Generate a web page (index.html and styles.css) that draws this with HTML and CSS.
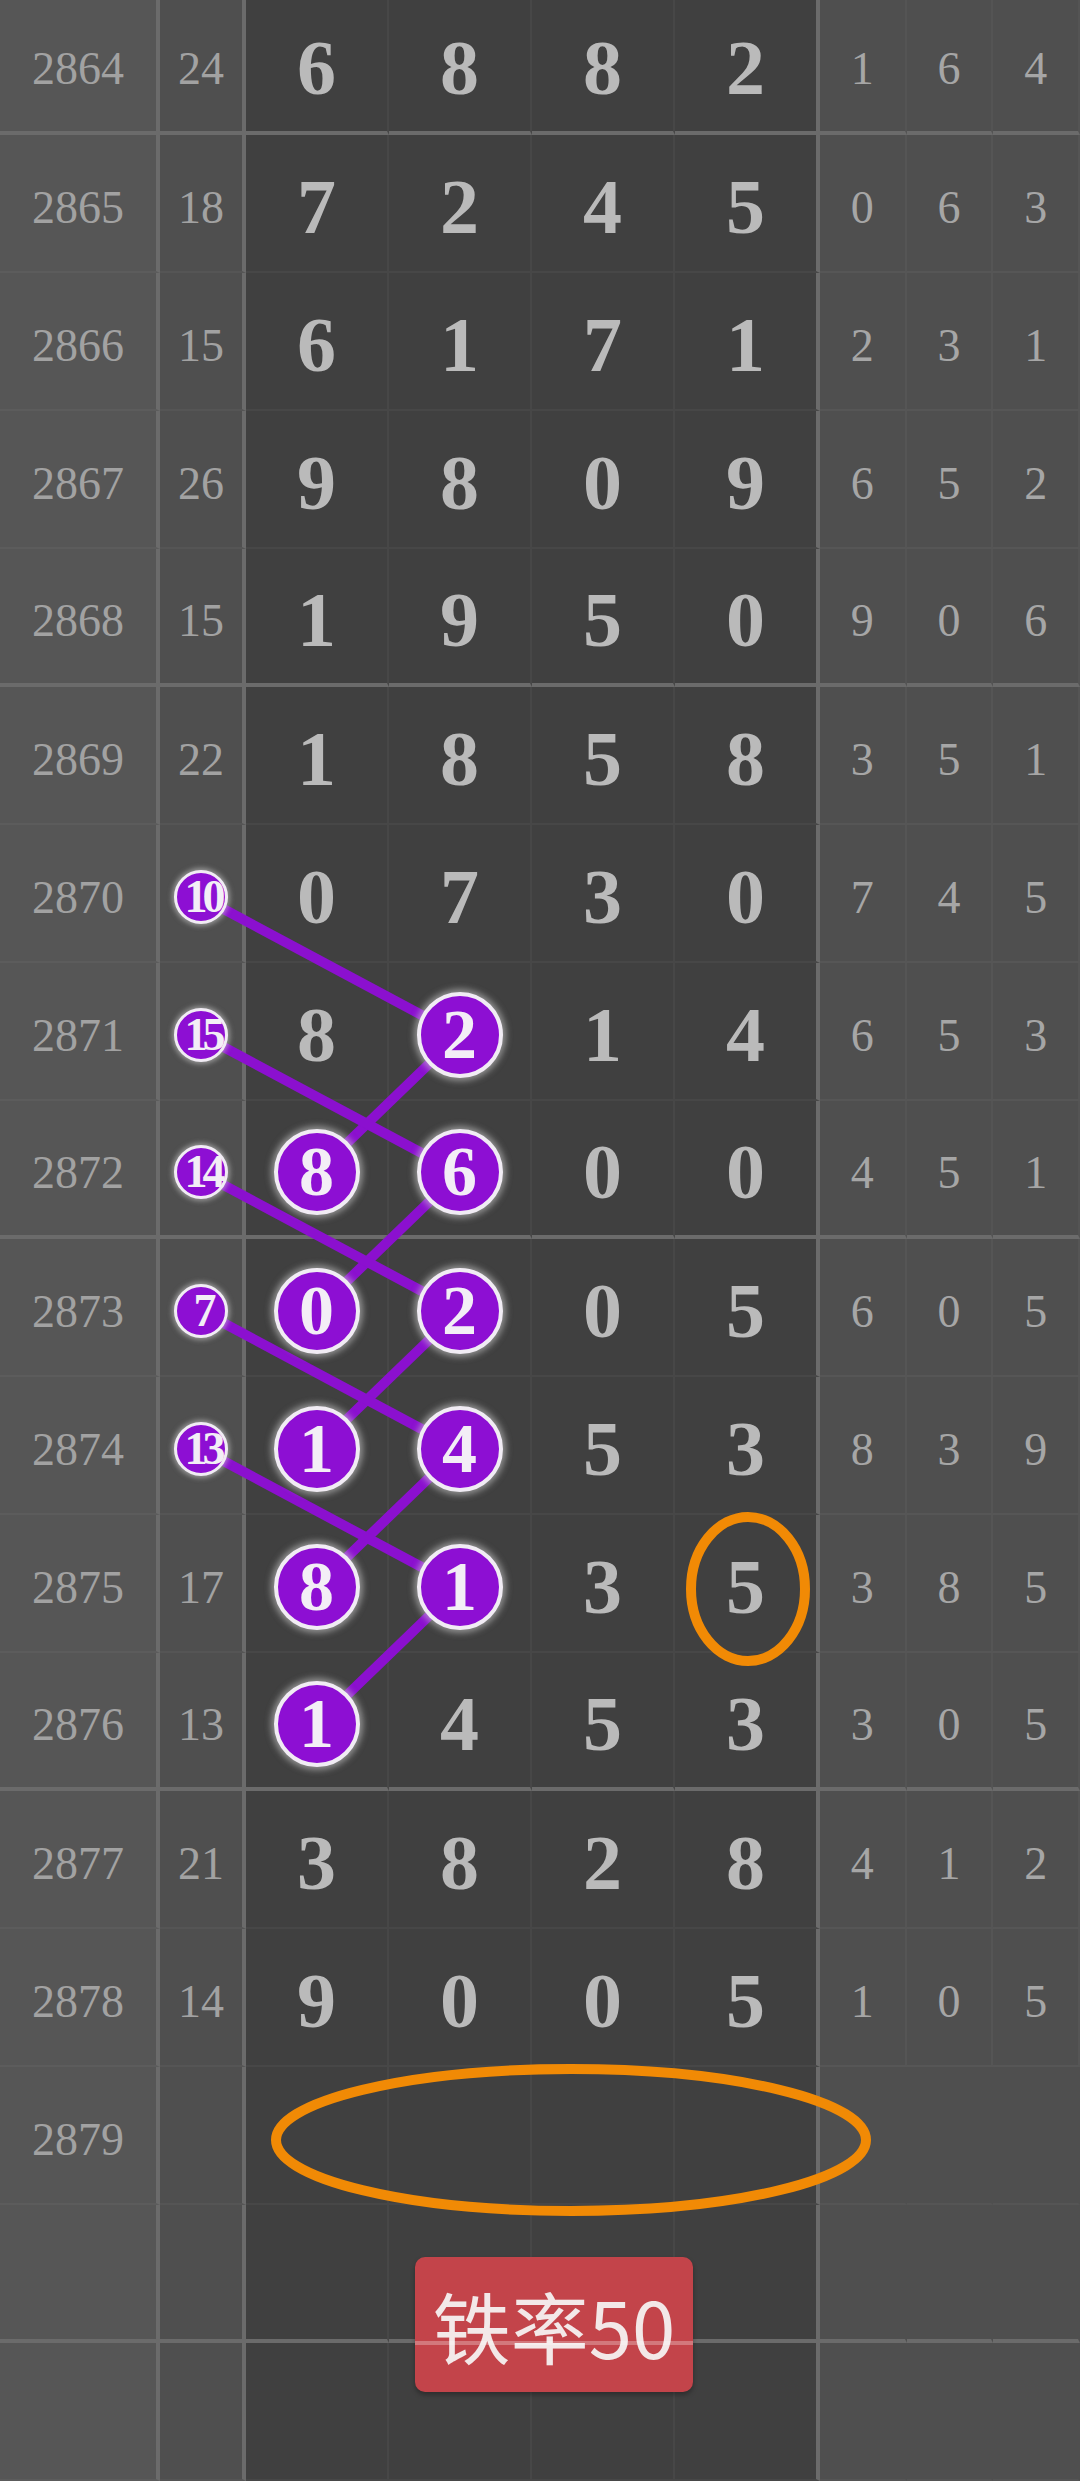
FILE: index.html
```html
<!DOCTYPE html>
<html lang="zh">
<head>
    <meta charset="UTF-8">
    <meta name="viewport" content="width=device-width, initial-scale=1.0">
    <title>走势图</title>
    <link rel="stylesheet" href="styles.css">
</head>
<body>
    <div class="page">
        <div class="sheet">
            <div class="row end"><div class="no">2864</div><div class="sum">24</div><div class="d">6</div><div class="d">8</div><div class="d">8</div><div class="d last">2</div><div class="r">1</div><div class="r">6</div><div class="r">4</div></div>
            <div class="row"><div class="no">2865</div><div class="sum">18</div><div class="d">7</div><div class="d">2</div><div class="d">4</div><div class="d last">5</div><div class="r">0</div><div class="r">6</div><div class="r">3</div></div>
            <div class="row"><div class="no">2866</div><div class="sum">15</div><div class="d">6</div><div class="d">1</div><div class="d">7</div><div class="d last">1</div><div class="r">2</div><div class="r">3</div><div class="r">1</div></div>
            <div class="row"><div class="no">2867</div><div class="sum">26</div><div class="d">9</div><div class="d">8</div><div class="d">0</div><div class="d last">9</div><div class="r">6</div><div class="r">5</div><div class="r">2</div></div>
            <div class="row end"><div class="no">2868</div><div class="sum">15</div><div class="d">1</div><div class="d">9</div><div class="d">5</div><div class="d last">0</div><div class="r">9</div><div class="r">0</div><div class="r">6</div></div>

            <div class="row"><div class="no">2869</div><div class="sum">22</div><div class="d">1</div><div class="d">8</div><div class="d">5</div><div class="d last">8</div><div class="r">3</div><div class="r">5</div><div class="r">1</div></div>
            <div class="row"><div class="no">2870</div><div class="sum"><span class="ball sm">10</span></div><div class="d">0</div><div class="d">7</div><div class="d">3</div><div class="d last">0</div><div class="r">7</div><div class="r">4</div><div class="r">5</div></div>
            <div class="row"><div class="no">2871</div><div class="sum"><span class="ball sm">15</span></div><div class="d">8</div><div class="d"><span class="ball">2</span></div><div class="d">1</div><div class="d last">4</div><div class="r">6</div><div class="r">5</div><div class="r">3</div></div>
            <div class="row end"><div class="no">2872</div><div class="sum"><span class="ball sm">14</span></div><div class="d"><span class="ball">8</span></div><div class="d"><span class="ball">6</span></div><div class="d">0</div><div class="d last">0</div><div class="r">4</div><div class="r">5</div><div class="r">1</div></div>

            <div class="row"><div class="no">2873</div><div class="sum"><span class="ball sm">7</span></div><div class="d"><span class="ball">0</span></div><div class="d"><span class="ball">2</span></div><div class="d">0</div><div class="d last">5</div><div class="r">6</div><div class="r">0</div><div class="r">5</div></div>
            <div class="row"><div class="no">2874</div><div class="sum"><span class="ball sm">13</span></div><div class="d"><span class="ball">1</span></div><div class="d"><span class="ball">4</span></div><div class="d">5</div><div class="d last">3</div><div class="r">8</div><div class="r">3</div><div class="r">9</div></div>
            <div class="row"><div class="no">2875</div><div class="sum">17</div><div class="d"><span class="ball">8</span></div><div class="d"><span class="ball">1</span></div><div class="d">3</div><div class="d last">5</div><div class="r">3</div><div class="r">8</div><div class="r">5</div></div>
            <div class="row end"><div class="no">2876</div><div class="sum">13</div><div class="d"><span class="ball">1</span></div><div class="d">4</div><div class="d">5</div><div class="d last">3</div><div class="r">3</div><div class="r">0</div><div class="r">5</div></div>

            <div class="row"><div class="no">2877</div><div class="sum">21</div><div class="d">3</div><div class="d">8</div><div class="d">2</div><div class="d last">8</div><div class="r">4</div><div class="r">1</div><div class="r">2</div></div>
            <div class="row"><div class="no">2878</div><div class="sum">14</div><div class="d">9</div><div class="d">0</div><div class="d">0</div><div class="d last">5</div><div class="r">1</div><div class="r">0</div><div class="r">5</div></div>
            <div class="row"><div class="no">2879</div><div class="sum"></div><div class="d"></div><div class="d"></div><div class="d"></div><div class="d last"></div><div class="r blank"></div><div class="r blank"></div><div class="r blank"></div></div>
            <div class="row end"><div class="no"></div><div class="sum"></div><div class="d"></div><div class="d"></div><div class="d"></div><div class="d last"></div><div class="r blank"></div><div class="r blank"></div><div class="r blank"></div></div>

            <div class="row"><div class="no"></div><div class="sum"></div><div class="d"></div><div class="d"></div><div class="d"></div><div class="d last"></div><div class="r blank"></div><div class="r blank"></div><div class="r blank"></div></div>
        </div>

        <!-- connecting lines and hand-drawn marks -->
        <svg class="marks" width="1080" height="2481" viewBox="0 0 1080 2481">
            <g stroke="#8b10cf" stroke-width="10" stroke-linecap="round">
                <line x1="201" y1="897" x2="459" y2="1035"/>
                <line x1="459" y1="1035" x2="316" y2="1173"/>
                <line x1="201" y1="1035" x2="459" y2="1173"/>
                <line x1="459" y1="1173" x2="316" y2="1311"/>
                <line x1="201" y1="1173" x2="459" y2="1311"/>
                <line x1="459" y1="1311" x2="316" y2="1449"/>
                <line x1="201" y1="1311" x2="459" y2="1449"/>
                <line x1="459" y1="1449" x2="316" y2="1587"/>
                <line x1="201" y1="1449" x2="459" y2="1587"/>
                <line x1="459" y1="1587" x2="316" y2="1725"/>
            </g>
            <g fill="none" stroke="#f18a05" stroke-width="10">
                <ellipse cx="748" cy="1589" rx="57" ry="72"/>
                <ellipse cx="571" cy="2140" rx="295" ry="71"/>
            </g>
        </svg>

        <div class="badge">铁率50</div>
    </div>
</body>
</html>
```

FILE: styles.css
```css
* {
    box-sizing: border-box;
}

body {
    margin: 0;
    background: #404040;
    font-family: "Liberation Serif", "Times New Roman", serif;
}

.page {
    position: relative;
    width: 1080px;
    height: 2481px;
    overflow: hidden;
}

.sheet {
    margin-top: -3px;
}

.row {
    display: grid;
    grid-template-columns: 160px 86px 143px 143px 143px 145px 1fr 1fr 1fr;
    height: 138px;
}

.row > div {
    display: flex;
    align-items: center;
    justify-content: center;
    padding-top: 8px;
    border-bottom: 2px solid rgba(255, 255, 255, 0.04);
}

.row.end > div {
    border-bottom: 4px solid #6b6b6b;
}

.no {
    background: #565656;
    border-right: 4px solid #6b6b6b;
    color: #a2a2a2;
    font-size: 46px;
}

.sum {
    background: #4f4f4f;
    border-right: 4px solid #6b6b6b;
    color: #a2a2a2;
    font-size: 46px;
}

.d {
    background: #404040;
    border-right: 2px solid rgba(255, 255, 255, 0.04);
    color: #bababa;
    font-size: 78px;
    font-weight: bold;
}

.d.last {
    border-right: 4px solid #6b6b6b;
}

.r {
    background: #4f4f4f;
    border-right: 2px solid rgba(255, 255, 255, 0.03);
    color: #a6a6a6;
    font-size: 46px;
}

.r.blank {
    border-right-color: transparent;
}

.ball {
    position: relative;
    z-index: 2;
    display: flex;
    align-items: center;
    justify-content: center;
    width: 86px;
    height: 86px;
    border-radius: 50%;
    background: #8d0fd3;
    border: 4px solid #f1ecf4;
    box-shadow: 0 0 6px 3px rgba(210, 210, 210, 0.55);
    color: #f3eef6;
    font-size: 70px;
    font-weight: bold;
    line-height: 1;
}

.ball.sm {
    width: 54px;
    height: 54px;
    border-width: 3px;
    box-shadow: 0 0 5px 2px rgba(210, 210, 210, 0.55);
    font-size: 46px;
    letter-spacing: -5px;
    padding-left: 3px;
}

.marks {
    position: absolute;
    top: 0;
    left: 0;
    z-index: 1;
}

.badge {
    position: absolute;
    left: 415px;
    top: 2257px;
    z-index: 3;
    width: 278px;
    height: 135px;
    display: flex;
    align-items: center;
    justify-content: center;
    background: #c3444a;
    border-radius: 10px;
    box-shadow: 0 3px 5px rgba(0, 0, 0, 0.3);
    color: #f3e8e8;
    font-family: "Noto Sans CJK SC", sans-serif;
    font-size: 78px;
}

.badge::after {
    content: "";
    position: absolute;
    left: 0;
    right: 0;
    top: 84px;
    height: 4px;
    background: rgba(255, 255, 255, 0.28);
}
```
